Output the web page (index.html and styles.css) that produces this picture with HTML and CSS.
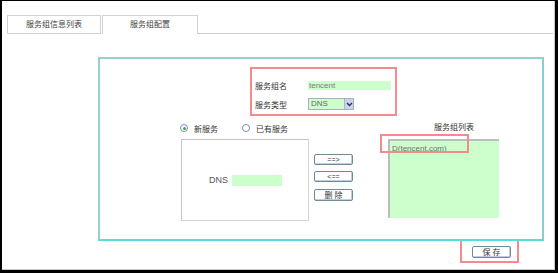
FILE: index.html
```html
<!DOCTYPE html>
<html lang="zh-CN">
<head>
    <meta charset="UTF-8">
    <title>服务组配置</title>
    <link rel="stylesheet" href="styles.css">
</head>
<body>
    <div class="frame">
        <!-- 标签页 -->
        <div class="tabs">
            <div class="tab">服务组信息列表</div>
            <div class="tab active">服务组配置</div>
            <div class="tab-fill"></div>
        </div>

        <div class="panel">
            <!-- 服务组基本信息 -->
            <div class="name-box">
                <div class="row">
                    <span class="label">服务组名</span>
                    <input class="field name-field" type="text" value="tencent" readonly>
                </div>
                <div class="row">
                    <span class="label">服务类型</span>
                    <div class="select">
                        <span class="select-text">DNS</span>
                        <span class="select-arrow">
                            <svg width="7" height="5" viewBox="0 0 7 5"><path d="M1 1 L3.5 3.5 L6 1" fill="none" stroke="#334" stroke-width="1.4"/></svg>
                        </span>
                    </div>
                </div>
            </div>

            <div class="work">
                <!-- 左侧：服务 -->
                <div class="col-left">
                    <div class="radios">
                        <label class="radio"><span class="dot checked"></span>新服务</label>
                        <label class="radio"><span class="dot"></span>已有服务</label>
                    </div>
                    <div class="service-box">
                        <span class="dns-label">DNS</span>
                        <input class="field dns-field" type="text" value="" readonly>
                    </div>
                </div>

                <!-- 中间按钮 -->
                <div class="col-mid">
                    <button class="btn">==&gt;</button>
                    <button class="btn">&lt;==</button>
                    <button class="btn btn-del">删 除</button>
                </div>

                <!-- 右侧：服务组列表 -->
                <div class="col-right">
                    <div class="list-title">服务组列表</div>
                    <div class="list-box">
                        <div class="list-item">D(tencent.com)</div>
                    </div>
                </div>
            </div>

            <div class="mark"></div>
        </div>

        <div class="actions">
            <div class="save-box">
                <button class="btn btn-save">保 存</button>
            </div>
        </div>
    </div>
</body>
</html>
```

FILE: styles.css
```css
* {
    box-sizing: border-box;
    margin: 0;
    padding: 0;
}

body {
    font-family: "Liberation Sans", "Noto Sans CJK SC", sans-serif;
    font-size: 8px;
    color: #333;
    background-color: #ffffff;
}

.frame {
    width: 558px;
    height: 273px;
    border-top: 1px solid #000;
    border-left: 2px solid #000;
    border-right: 3px solid #000;
    border-bottom: 3px solid #000;
    box-shadow: inset -1px -1px 0 #c8c8c8;
}

.tabs {
    display: flex;
    padding: 14px 2px 0 5px;
    height: 33px;
}

.tab {
    width: 94px;
    height: 19px;
    border: 1px solid #d2d2d2;
    text-align: center;
    line-height: 17px;
    color: #444;
}

.tab.active {
    width: 96px;
    margin-left: 1px;
    border-bottom: none;
}

.tab-fill {
    flex: 1;
    border-bottom: 1px solid #cfcfcf;
}

.panel {
    position: relative;
    width: 446px;
    height: 184px;
    margin: 23px 0 0 96px;
    border: 2px solid #95cfcf;
    border-bottom-color: #55dcdc;
    border-right-color: #8fcccc;
}

.name-box {
    width: 147px;
    height: 49px;
    margin: 8px 0 0 150px;
    padding: 10px 0 0 3px;
    border: 2px solid #f58a8a;
}

.row {
    display: flex;
    align-items: center;
    height: 12px;
    margin-bottom: 7px;
}

.label {
    width: 53px;
    color: #333;
}

.field {
    border: none;
    outline: none;
    background-color: #ccffcc;
    font-family: "Liberation Sans", sans-serif;
    font-size: 8px;
    color: #7a7a7a;
    padding: 0 1px;
}

.name-field {
    width: 83px;
    height: 9px;
}

.select {
    display: flex;
    width: 46px;
    height: 12px;
    border: 1px solid #a9b0bb;
    background-color: #ccffcc;
}

.select-text {
    flex: 1;
    padding-left: 2px;
    line-height: 10px;
    color: #666;
}

.select-arrow {
    width: 9px;
    display: flex;
    align-items: center;
    justify-content: center;
    background-color: #c9d2f2;
    border-left: 1px solid #aab4d8;
}

.work {
    display: flex;
    align-items: flex-start;
}

.col-left {
    margin-left: 80px;
}

.radios {
    display: flex;
    height: 10px;
    margin-top: 7px;
    align-items: center;
}

.radio {
    display: flex;
    align-items: center;
    gap: 6px;
    width: 62px;
    color: #333;
}

.dot {
    width: 8px;
    height: 8px;
    border-radius: 50%;
    border: 1px solid #7d8db5;
    background-color: #fff;
    position: relative;
}

.dot.checked::after {
    content: "";
    position: absolute;
    left: 1.5px;
    top: 1.5px;
    width: 3px;
    height: 3px;
    border-radius: 50%;
    background-color: #3bb33b;
}

.service-box {
    display: flex;
    align-items: center;
    width: 128px;
    height: 82px;
    margin: 6px 0 0 1px;
    padding-left: 27px;
    border: 1px solid #d4d4d4;
    border-left-color: #c4c4c4;
    border-top-color: #c4c4c4;
}

.dns-label {
    width: 23px;
    color: #555;
    font-size: 9px;
}

.dns-field {
    width: 50px;
    height: 11px;
}

.col-mid {
    display: flex;
    flex-direction: column;
    margin: 38px 0 0 5px;
}

.btn {
    width: 39px;
    height: 11px;
    border: 1px solid #6b8e96;
    border-radius: 2px;
    background-color: #fff;
    box-shadow: inset -1px -1px 0 #c4cbe6;
    font-family: "Liberation Sans", "Noto Sans CJK SC", sans-serif;
    font-size: 7px;
    line-height: 9px;
    color: #333;
    margin-bottom: 6px;
}

.btn-del {
    height: 12px;
    margin-top: 1px;
    font-size: 8px;
}

.col-right {
    margin-left: 35px;
}

.list-title {
    height: 10px;
    margin-top: 7px;
    padding-left: 46px;
    line-height: 10px;
    color: #333;
}

.list-box {
    width: 111px;
    height: 79px;
    margin-top: 6px;
    background-color: #ccffcc;
    border-left: 2px solid #bdbdbd;
    border-top: 2px solid #bdbdbd;
    padding: 3px 0 0 2px;
}

.list-item {
    color: #6f6f6f;
    line-height: 9px;
}

.mark {
    position: absolute;
    left: 280px;
    top: 75px;
    width: 89px;
    height: 19px;
    border: 2px solid #f58a8a;
}

.actions {
    display: flex;
    justify-content: flex-end;
    width: 446px;
    margin: -2px 0 0 96px;
    padding-right: 25px;
}

.save-box {
    width: 59px;
    height: 24px;
    padding: 5px 0 0 10px;
    border: 2px solid #f58a8a;
}

.btn-save {
    height: 12px;
    font-size: 8px;
}
```
